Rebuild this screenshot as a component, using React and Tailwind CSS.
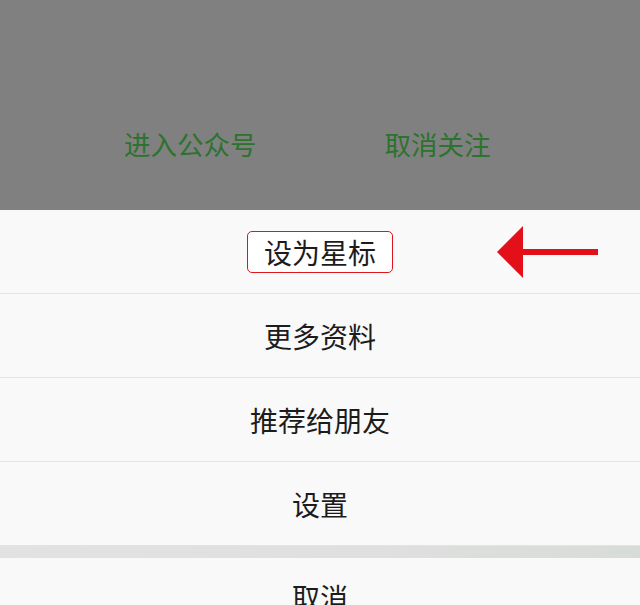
import React from 'react';

const font = { fontFamily: '"Noto Sans CJK SC", "Noto Sans", sans-serif' };

const Row = ({ children }) => (
	<div className="h-[84px] flex items-center justify-center border-b border-[#e3e3e3] bg-[#f9f9f9] text-[28px] text-[#1c1c1c]">
		{children}
	</div>
);

const App = () => {
	return (
		<div className="w-[640px] h-[605px] overflow-hidden bg-[#f9f9f9]" style={font}>
			{/* dimmed page behind the sheet */}
			<div className="h-[210px] bg-[#808080] flex items-end pb-[46px] pl-[124px] gap-[128px] text-[26.5px] text-[#2d722d]">
				<span>进入公众号</span>
				<span>取消关注</span>
			</div>

			<div className="relative">
				<Row>
					<span className="px-[16px] h-[42px] flex items-center border-[1.5px] border-[#e0141c] rounded-[5px] bg-white">
						设为星标
					</span>
				</Row>
				{/* red arrow pointing at the highlighted item */}
				<svg className="absolute left-[496px] top-[16px]" width="104" height="54" viewBox="0 0 104 54">
					<polygon points="1,26 27,0 27,52" fill="#e3101a" />
					<rect x="26" y="23" width="76" height="6" fill="#e3101a" />
				</svg>
				<Row>更多资料</Row>
				<Row>推荐给朋友</Row>
				<Row>设置</Row>
				<div className="h-[12px] bg-gradient-to-r from-[#e2e2e2] via-[#e0e0e0] to-[#d8dcd8]" />
				<div className="h-[60px] flex items-center justify-center pt-[18px] text-[28px] text-[#1c1c1c] bg-[#f9f9f9]">
					取消
				</div>
			</div>
		</div>
	);
};

export default App;
